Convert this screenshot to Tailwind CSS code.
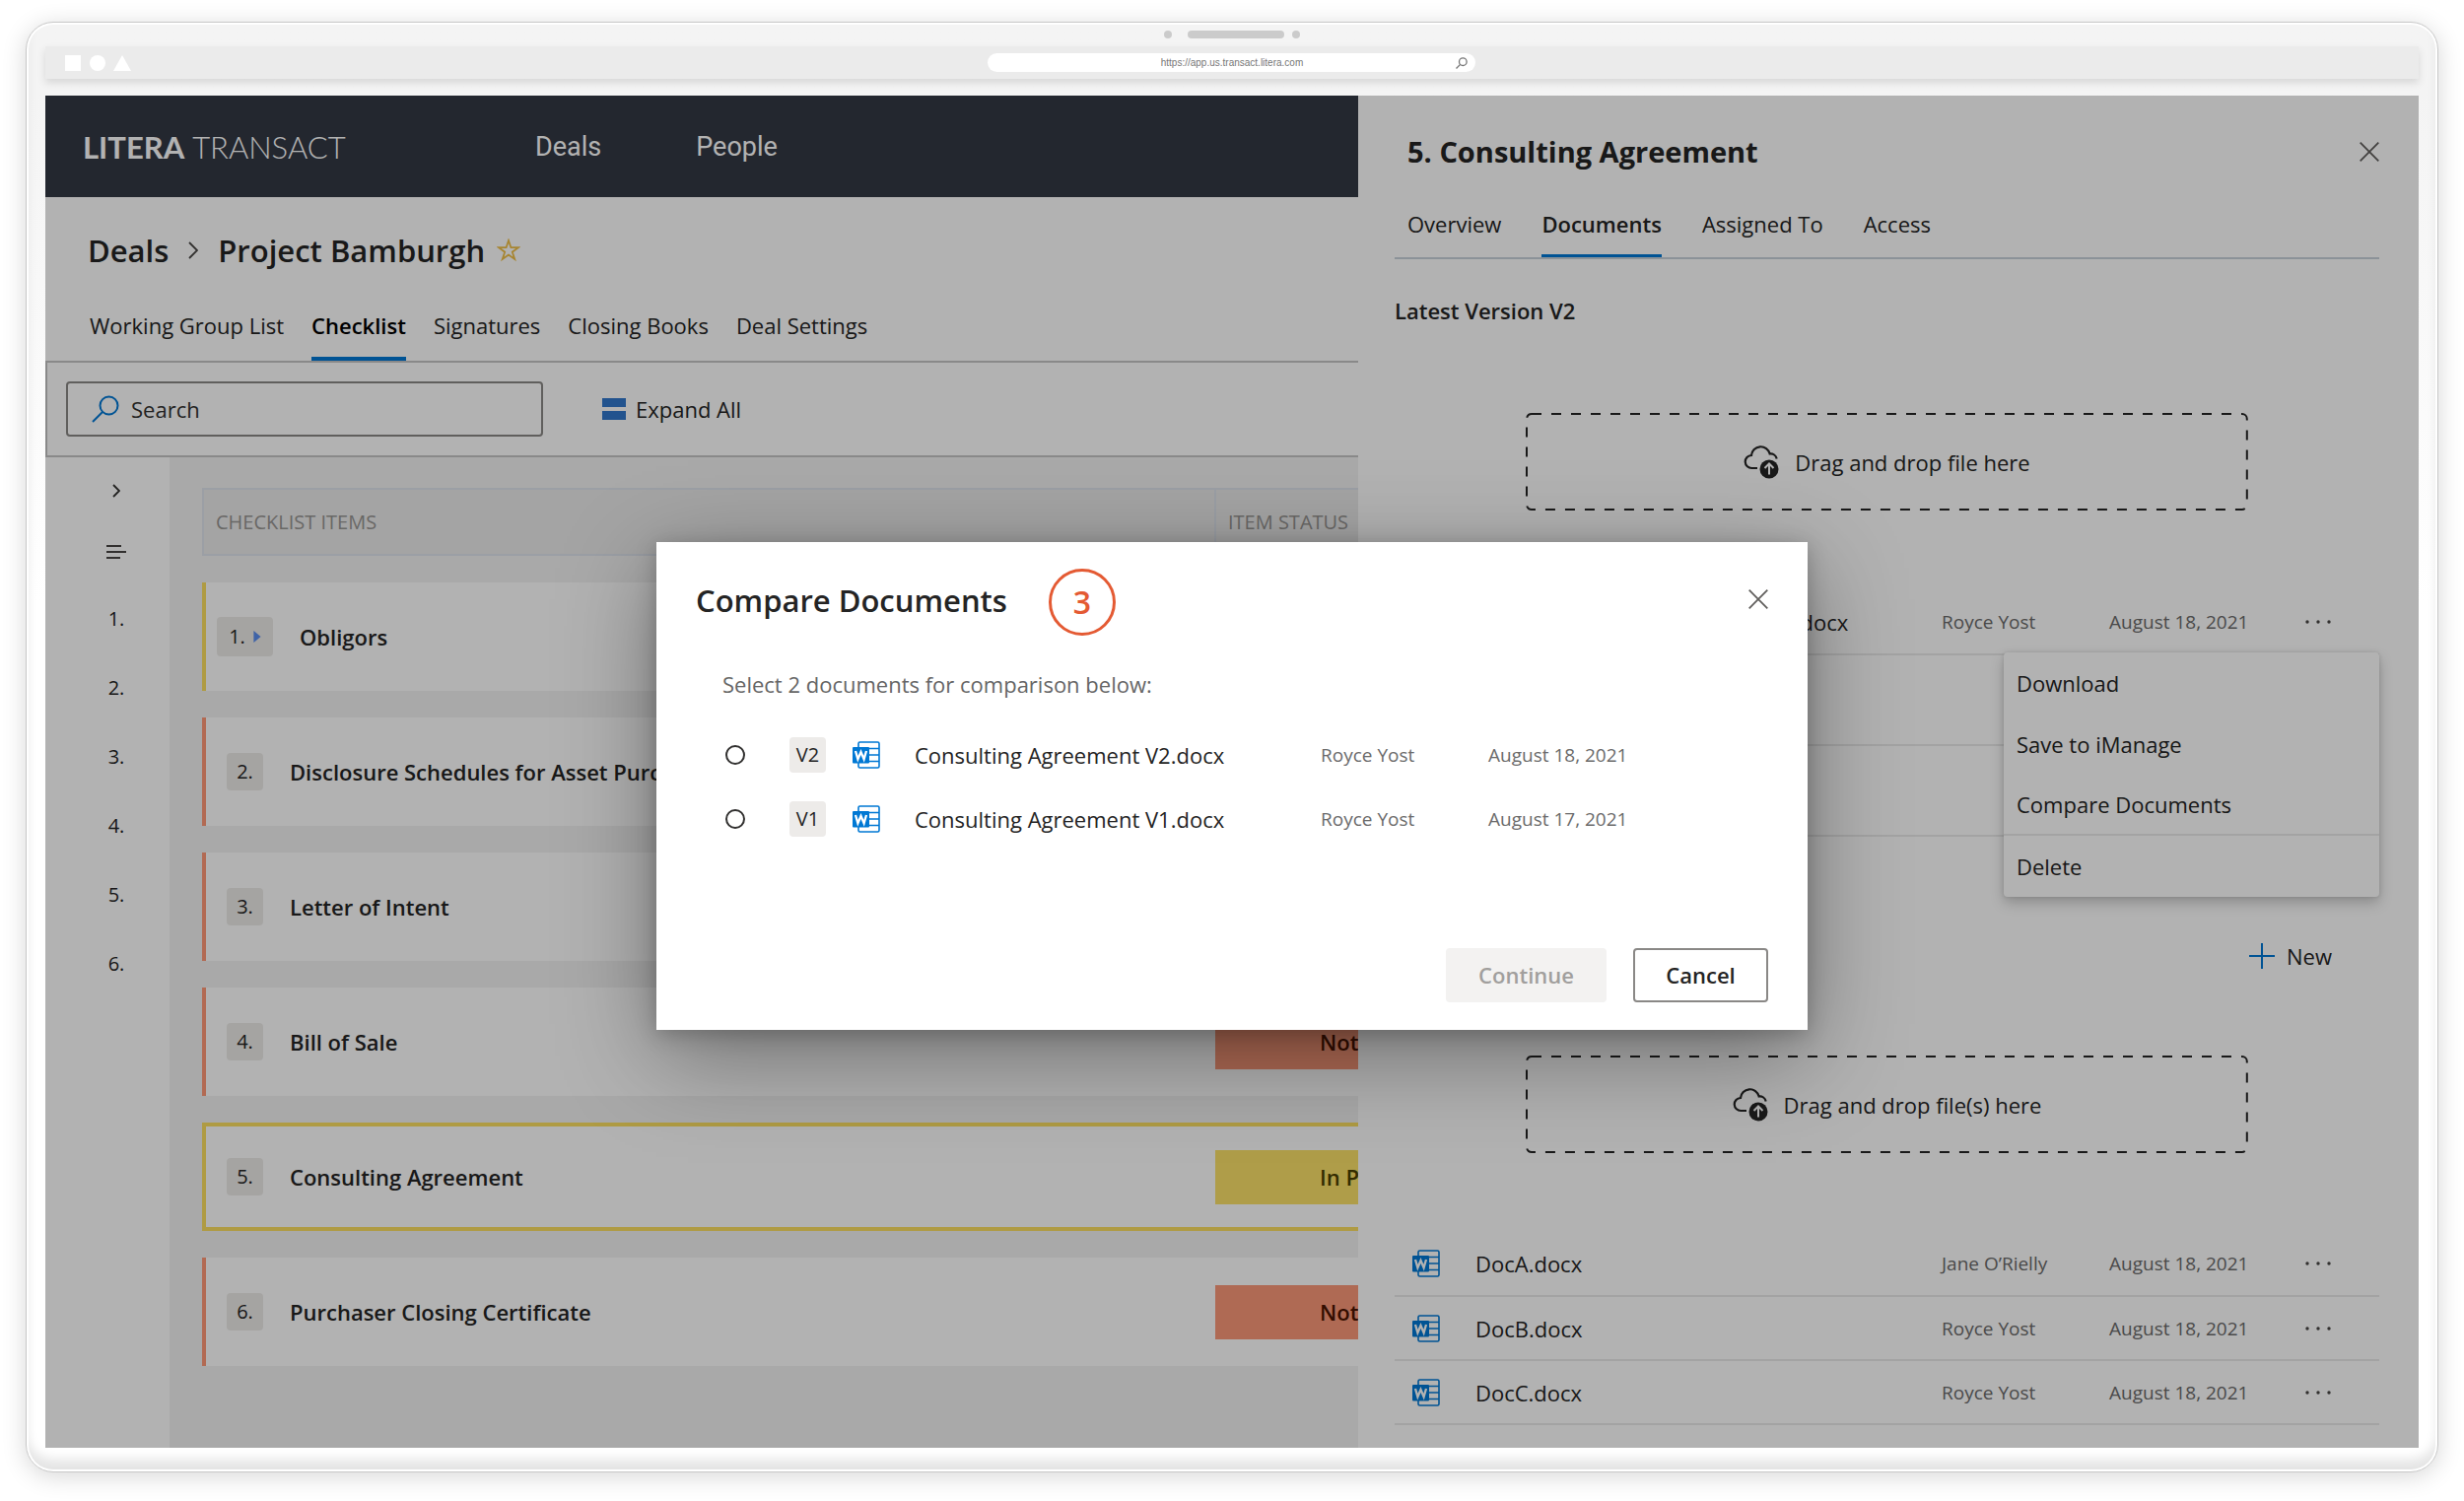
<!DOCTYPE html>
<html lang="en">
<head>
  <meta charset="UTF-8" />
  <meta name="viewport" content="width=device-width, initial-scale=1.0" />
  <title>Litera Transact - Compare Documents</title>
  <script src="https://cdn.jsdelivr.net/npm/@tailwindcss/browser@4"></script>
</head>
<body class="bg-white font-['Open_Sans',sans-serif] text-[22px] leading-8 text-[#242424]">

  <!-- Shared icons -->
  <svg class="hidden">
    <symbol id="icon-word" viewBox="0 0 28 28">
      <rect x="6" y="1" width="21" height="26" rx="1.500" fill="none" stroke="#0078d4" stroke-width="1.600" />
      <path d="M15 7.500h12M15 14h12M15 20.500h12" fill="none" stroke="#0078d4" stroke-width="1.600" />
      <rect x="0" y="6" width="17" height="16.500" rx="1" fill="#0078d4" />
      <path d="M3 10l2.400 8.300L8.500 11l3.100 7.300L14 10" fill="none" stroke="#fff" stroke-width="2.300" />
    </symbol>
    <symbol id="icon-upload" viewBox="0 0 36 36">
      <path d="M14 24H8.500a6.500 6.500 0 0 1-.5-13 9.500 9.500 0 0 1 18.700-1.500 6.500 6.500 0 0 1 7 5" fill="none" stroke="#242424" stroke-width="2.200" />
      <circle cx="26" cy="25" r="9.500" fill="#242424" />
      <path d="M26 30.500v-11M21.500 24l4.500-4.500 4.500 4.500" fill="none" stroke="#fff" stroke-width="2" />
    </symbol>
    <symbol id="icon-close" viewBox="0 0 20 20">
      <path d="M.7.7l18.600 18.600M19.300.7L.7 19.300" fill="none" stroke="#605e5c" stroke-width="1.800" />
    </symbol>
    <symbol id="icon-more" viewBox="0 0 26 4">
      <g fill="#484644"><circle cx="2" cy="2" r="1.700" /><circle cx="13" cy="2" r="1.700" /><circle cx="24" cy="2" r="1.700" /></g>
    </symbol>
  </svg>

  <div class="flex min-h-screen px-[26px] pt-[22px] pb-[29px]">
    <!-- Device frame -->
    <div class="flex min-w-0 flex-1 flex-col rounded-[28px] border border-[#c8c8c8] bg-linear-to-b from-[#f4f4f4] from-5% to-white to-40% px-[19px] pb-6 shadow-[0_4px_24px_rgba(0,0,0,0.16),inset_0_0_0_2px_#fff,inset_0_-12px_12px_#e4e4e4]">

      <div class="flex h-6 items-center justify-center gap-2">
        <span class="mr-2 size-2 rounded-full bg-[#cbcbcb]"></span>
        <span class="h-2 w-[98px] rounded-full bg-[#cbcbcb]"></span>
        <span class="size-2 rounded-full bg-[#cbcbcb]"></span>
      </div>

      <!-- Browser bar -->
      <div class="grid h-[33px] grid-cols-3 items-center bg-[#ebebeb] px-5 shadow-[0_4px_8px_rgba(0,0,0,0.12)]">
        <svg class="h-4 w-[68px]" viewBox="0 0 68 16" fill="#fff"><rect width="16" height="16" /><circle cx="33" cy="8" r="8" /><path d="M58 0l9 16H49z" /></svg>
        <label class="flex h-[19px] w-[495px] items-center justify-self-center rounded-full bg-white pr-2 pl-5">
          <input type="text" aria-label="Address" value="https://app.us.transact.litera.com" class="min-w-0 flex-1 text-center font-['Liberation_Sans',sans-serif] text-[10px] leading-4 text-[#777]" />
          <svg class="h-3 w-3" viewBox="0 0 12 12" fill="none" stroke="#777" stroke-width="1.300"><circle cx="7.300" cy="4.700" r="3.800" /><path d="M4.600 7.400L.5 11.500" /></svg>
        </label>
      </div>

      <!-- Screen -->
      <div class="relative mt-[17px] flex flex-1 overflow-hidden bg-white">

        <!-- Deal page -->
        <main class="flex min-w-0 flex-1 flex-col overflow-hidden">
          <header class="flex h-[103px] items-center bg-[#333844] pl-[38px]">
            <div class="w-[459px] font-['Lato',sans-serif] text-[31px] text-white"><span class="font-bold">LITERA</span> <span class="font-light">TRANSACT</span></div>
            <nav class="flex gap-24 font-['Roboto',sans-serif] text-[27px] text-white">
              <a href="#">Deals</a>
              <a href="#">People</a>
            </nav>
          </header>

          <div class="flex h-[108px] items-center gap-3 pl-[43px] text-[31px] font-semibold">
            <a href="#">Deals</a>
            <svg class="mx-2 h-[18px] w-[10px]" viewBox="0 0 10 18" fill="none" stroke="#484644" stroke-width="1.800"><path d="M1 1l8 8-8 8" /></svg>
            <h1>Project Bamburgh</h1>
            <button aria-label="Favourite"><svg class="size-6" viewBox="0 0 24 24" fill="none" stroke="#f0bf45" stroke-width="1.800"><path d="M12 2l2.400 7.200H22l-6.200 4.500 2.400 7.300-6.200-4.500L5.800 21l2.400-7.300L2 9.200h7.600z" /></svg></button>
          </div>

          <nav class="flex h-[58px] gap-7 pl-[45px] whitespace-nowrap">
            <a href="#" class="pt-1.5">Working Group List</a>
            <a href="#" class="border-b-4 border-[#0078d4] pt-1.5 font-semibold text-black">Checklist</a>
            <a href="#" class="pt-1.5">Signatures</a>
            <a href="#" class="pt-1.5">Closing Books</a>
            <a href="#" class="pt-1.5">Deal Settings</a>
          </nav>

          <div class="flex h-[98px] items-center gap-[60px] border-y-2 border-l-2 border-[#c4c4c4] pl-[19px]">
            <label class="flex h-14 w-[484px] items-center gap-3 rounded border-2 border-[#8a8886] pl-6">
              <svg class="size-7" viewBox="0 0 28 28" fill="none" stroke="#0078d4" stroke-width="2"><circle cx="17.500" cy="10.500" r="9" /><path d="M11 17L1 27" /></svg>
              <input type="text" aria-label="Search" placeholder="Search" class="min-w-0 flex-1 placeholder:text-[#323130]" />
            </label>
            <button class="flex items-center gap-[10px]">
              <svg class="h-[22px] w-6" viewBox="0 0 24 22" fill="#3277cc"><rect width="24" height="9" /><rect y="13" width="24" height="9" /></svg>
              Expand All
            </button>
          </div>

          <div class="flex flex-1">
            <aside class="flex w-[126px] shrink-0 flex-col items-center pt-[26px] pl-[18px]">
              <button aria-label="Expand sidebar"><svg class="h-4 w-2" viewBox="0 0 8 16" fill="none" stroke="#323130" stroke-width="1.800"><path d="M1 2l6 6-6 6" /></svg></button>
              <button aria-label="Outline" class="mt-[46px]"><svg class="h-4 w-5" viewBox="0 0 20 16" fill="none" stroke="#484644" stroke-width="2"><path d="M0 2h15M0 8h20M0 14h14" /></svg></button>
              <ol class="mt-11 flex flex-col gap-[38px] text-[20px]">
                <li>1.</li>
                <li>2.</li>
                <li>3.</li>
                <li>4.</li>
                <li>5.</li>
                <li>6.</li>
              </ol>
            </aside>

            <section class="flex min-w-0 flex-1 flex-col gap-[27px] bg-[#f2f2f2] pt-[31px] pl-[33px] whitespace-nowrap">
              <div class="flex h-[69px] items-center border-y-2 border-l-2 border-[#dfe4ec] bg-[#ebebeb] text-[20px] text-[#979593]">
                <span class="w-[1025px] shrink-0 pl-3">CHECKLIST ITEMS</span>
                <span class="flex h-full items-center border-l-2 border-[#dfe4ec] pl-3">ITEM STATUS</span>
              </div>
              <div class="flex h-[110px] items-center border-l-4 border-[#fbdf60] bg-white pl-[11px] font-semibold">
                <button class="mr-[27px] flex h-10 w-[57px] items-center justify-center gap-2 rounded bg-[#edebe9] text-[20px] font-normal">1.<svg class="h-3 w-2" viewBox="0 0 6 10" fill="#5b8ff0"><path d="M0 0l6 5-6 5z" /></svg></button>
                Obligors
              </div>
              <div class="flex h-[110px] items-center border-l-4 border-[#ff9877] bg-white pl-[21px] font-semibold">
                <span class="mr-[27px] flex h-[38px] w-[37px] shrink-0 items-center justify-center rounded bg-[#edebe9] text-[20px] font-normal">2.</span>
                <span class="w-[939px] shrink-0">Disclosure Schedules for Asset Purchase</span>
              </div>
              <div class="flex h-[110px] items-center border-l-4 border-[#ff9877] bg-white pl-[21px] font-semibold">
                <span class="mr-[27px] flex h-[38px] w-[37px] shrink-0 items-center justify-center rounded bg-[#edebe9] text-[20px] font-normal">3.</span>
                <span class="w-[939px] shrink-0">Letter of Intent</span>
              </div>
              <div class="flex h-[110px] items-center border-l-4 border-[#ff9877] bg-white pl-[21px] font-semibold">
                <span class="mr-[27px] flex h-[38px] w-[37px] shrink-0 items-center justify-center rounded bg-[#edebe9] text-[20px] font-normal">4.</span>
                <span class="w-[939px] shrink-0">Bill of Sale</span>
                <span class="flex h-[55px] w-[334px] shrink-0 items-center bg-[#fb9979] pl-[106px] text-[#4a1300]">Not Started</span>
              </div>
              <div class="flex h-[110px] items-center border-4 border-r-0 border-[#fbdf60] bg-white pl-[21px] font-semibold">
                <span class="mr-[27px] flex h-[38px] w-[37px] shrink-0 items-center justify-center rounded bg-[#edebe9] text-[20px] font-normal">5.</span>
                <span class="w-[939px] shrink-0">Consulting Agreement</span>
                <span class="flex h-[55px] w-[334px] shrink-0 items-center bg-[#fbe169] pl-[106px] text-[#4a3f00]">In Progress</span>
              </div>
              <div class="flex h-[110px] items-center border-l-4 border-[#ff9877] bg-white pl-[21px] font-semibold">
                <span class="mr-[27px] flex h-[38px] w-[37px] shrink-0 items-center justify-center rounded bg-[#edebe9] text-[20px] font-normal">6.</span>
                <span class="w-[939px] shrink-0">Purchaser Closing Certificate</span>
                <span class="flex h-[55px] w-[334px] shrink-0 items-center bg-[#fb9979] pl-[106px] text-[#4a1300]">Not Started</span>
              </div>
            </section>
          </div>
        </main>

        <!-- Item panel -->
        <aside class="w-[1076px] shrink-0 pr-10 pl-[37px]">
          <div class="flex h-[114px] items-center justify-between pl-[13px]">
            <h2 class="text-[29px] font-bold">5. Consulting Agreement</h2>
            <button aria-label="Close panel"><svg class="size-5"><use href="#icon-close" /></svg></button>
          </div>

          <nav class="flex h-[52px] gap-[41px] border-b-2 border-[#c8d1da] pl-[13px]">
            <a href="#">Overview</a>
            <a href="#" class="border-b-3 border-[#0078d4] font-semibold">Documents</a>
            <a href="#">Assigned To</a>
            <a href="#">Access</a>
          </nav>

          <h3 class="mt-9 font-semibold">Latest Version V2</h3>

          <button class="relative mx-auto mt-[88px] flex h-[99px] w-[733px] items-center justify-center gap-4">
            <svg class="absolute inset-0 size-full overflow-visible"><rect x="1" y="1" width="99.700%" height="98%" rx="5" fill="none" stroke="#242424" stroke-width="2" stroke-dasharray="10 10" /></svg>
            <svg class="size-9"><use href="#icon-upload" /></svg>
            Drag and drop file here
          </button>

          <div class="relative mt-20">
            <table class="w-full table-fixed text-left">
              <tbody>
                <tr class="h-[66px] border-b-2 border-[#eaeaea]">
                  <td class="w-[84px] pl-4"><span class="rounded bg-[#edebe9] px-1 text-[20px]">V2</span></td>
                  <td class="w-[62px]"><svg class="size-7"><use href="#icon-word" /></svg></td>
                  <td>Consulting Agreement V2.docx</td>
                  <td class="w-[170px] text-[19px] text-[#6b6b6b]">Royce Yost</td>
                  <td class="w-[199px] text-[19px] text-[#6b6b6b]">August 18, 2021</td>
                  <td class="w-[75px]"><button aria-label="More" class="block"><svg class="h-1 w-[26px]"><use href="#icon-more" /></svg></button></td>
                </tr>
                <tr class="h-[92px] border-b-2 border-[#eaeaea]"><td colspan="6"></td></tr>
                <tr class="h-[92px] border-b-2 border-[#eaeaea]"><td colspan="6"></td></tr>
              </tbody>
            </table>
            <div class="absolute top-16 right-0 flex h-[248px] w-[381px] flex-col rounded bg-white text-left shadow-[0_6px_14px_rgba(0,0,0,0.22),0_0_4px_rgba(0,0,0,0.12)]">
              <button class="h-[62px] pl-[13px] text-left">Download</button>
              <button class="h-[62px] pl-[13px] text-left">Save to iManage</button>
              <button class="h-[62px] border-b-2 border-[#eaeaea] pl-[13px] text-left">Compare Documents</button>
              <button class="h-[62px] pl-[13px] text-left">Delete</button>
            </div>
          </div>

          <div class="mt-[105px] flex justify-end pr-12">
            <button class="flex items-center gap-3">
              <svg class="size-[26px]" viewBox="0 0 26 26" stroke="#0078d4" stroke-width="2"><path d="M13 0v26M0 13h26" /></svg>
              New
            </button>
          </div>

          <button class="relative mx-auto mt-[85px] flex h-[99px] w-[733px] items-center justify-center gap-4">
            <svg class="absolute inset-0 size-full overflow-visible"><rect x="1" y="1" width="99.700%" height="98%" rx="5" fill="none" stroke="#242424" stroke-width="2" stroke-dasharray="10 10" /></svg>
            <svg class="size-9"><use href="#icon-upload" /></svg>
            Drag and drop file(s) here
          </button>

          <table class="mt-20 w-full table-fixed text-left">
            <tbody>
              <tr class="h-[65px] border-b-2 border-[#eaeaea]">
                <td class="w-[82px] pl-[18px]"><svg class="size-7"><use href="#icon-word" /></svg></td>
                <td>DocA.docx</td>
                <td class="w-[170px] text-[19px] text-[#6b6b6b]">Jane O’Rielly</td>
                <td class="w-[199px] text-[19px] text-[#6b6b6b]">August 18, 2021</td>
                <td class="w-[75px]"><button aria-label="More" class="block"><svg class="h-1 w-[26px]"><use href="#icon-more" /></svg></button></td>
              </tr>
              <tr class="h-[65px] border-b-2 border-[#eaeaea]">
                <td class="pl-[18px]"><svg class="size-7"><use href="#icon-word" /></svg></td>
                <td>DocB.docx</td>
                <td class="text-[19px] text-[#6b6b6b]">Royce Yost</td>
                <td class="text-[19px] text-[#6b6b6b]">August 18, 2021</td>
                <td><button aria-label="More" class="block"><svg class="h-1 w-[26px]"><use href="#icon-more" /></svg></button></td>
              </tr>
              <tr class="h-[65px] border-b-2 border-[#eaeaea]">
                <td class="pl-[18px]"><svg class="size-7"><use href="#icon-word" /></svg></td>
                <td>DocC.docx</td>
                <td class="text-[19px] text-[#6b6b6b]">Royce Yost</td>
                <td class="text-[19px] text-[#6b6b6b]">August 18, 2021</td>
                <td><button aria-label="More" class="block"><svg class="h-1 w-[26px]"><use href="#icon-more" /></svg></button></td>
              </tr>
            </tbody>
          </table>
        </aside>

        <!-- Compare dialog -->
        <div class="absolute inset-0 flex items-center justify-center bg-black/30 pt-7">
          <div role="dialog" aria-labelledby="dialog-title" class="flex h-[495px] w-[1168px] flex-col bg-white px-10 pt-[27px] pb-7 shadow-[0_26px_90px_rgba(0,0,0,0.38),0_4px_20px_rgba(0,0,0,0.22)]">
            <div class="flex h-[69px] items-center">
              <h2 id="dialog-title" class="pb-1 text-[31px] font-semibold">Compare Documents</h2>
              <span class="ml-[42px] flex size-[68px] items-center justify-center rounded-full border-3 border-[#e45a33] text-[32px] font-semibold text-[#e45a33]">3</span>
              <button aria-label="Close dialog" class="ml-auto pb-1.5"><svg class="size-5"><use href="#icon-close" /></svg></button>
            </div>

            <p class="mt-8 pl-[27px] text-[#666]">Select 2 documents for comparison below:</p>

            <table class="mt-6 w-full table-fixed text-left">
              <tbody>
                <tr class="h-[65px]">
                  <td class="w-[95px] pl-[30px]"><input type="radio" name="doc" aria-label="Consulting Agreement V2.docx" class="block size-5 appearance-none rounded-full border-2 border-[#323130]" /></td>
                  <td class="w-16"><span class="flex h-9 w-[37px] items-center justify-center rounded bg-[#edebe9] text-[20px]">V2</span></td>
                  <td class="w-[63px]"><svg class="size-7"><use href="#icon-word" /></svg></td>
                  <td class="w-[412px]">Consulting Agreement V2.docx</td>
                  <td class="w-[170px] text-[19px] text-[#6b6b6b]">Royce Yost</td>
                  <td class="text-[19px] text-[#6b6b6b]">August 18, 2021</td>
                </tr>
                <tr class="h-[65px]">
                  <td class="pl-[30px]"><input type="radio" name="doc" aria-label="Consulting Agreement V1.docx" class="block size-5 appearance-none rounded-full border-2 border-[#323130]" /></td>
                  <td><span class="flex h-9 w-[37px] items-center justify-center rounded bg-[#edebe9] text-[20px]">V1</span></td>
                  <td><svg class="size-7"><use href="#icon-word" /></svg></td>
                  <td>Consulting Agreement V1.docx</td>
                  <td class="text-[19px] text-[#6b6b6b]">Royce Yost</td>
                  <td class="text-[19px] text-[#6b6b6b]">August 17, 2021</td>
                </tr>
              </tbody>
            </table>

            <div class="mt-auto flex justify-end gap-[27px] font-semibold">
              <button disabled class="h-[55px] w-[163px] rounded bg-[#f3f2f1] text-[#a19f9d]">Continue</button>
              <button class="h-[55px] w-[137px] rounded border-2 border-[#8a8886]">Cancel</button>
            </div>
          </div>
        </div>
      </div>
    </div>
  </div>

</body>
</html>
